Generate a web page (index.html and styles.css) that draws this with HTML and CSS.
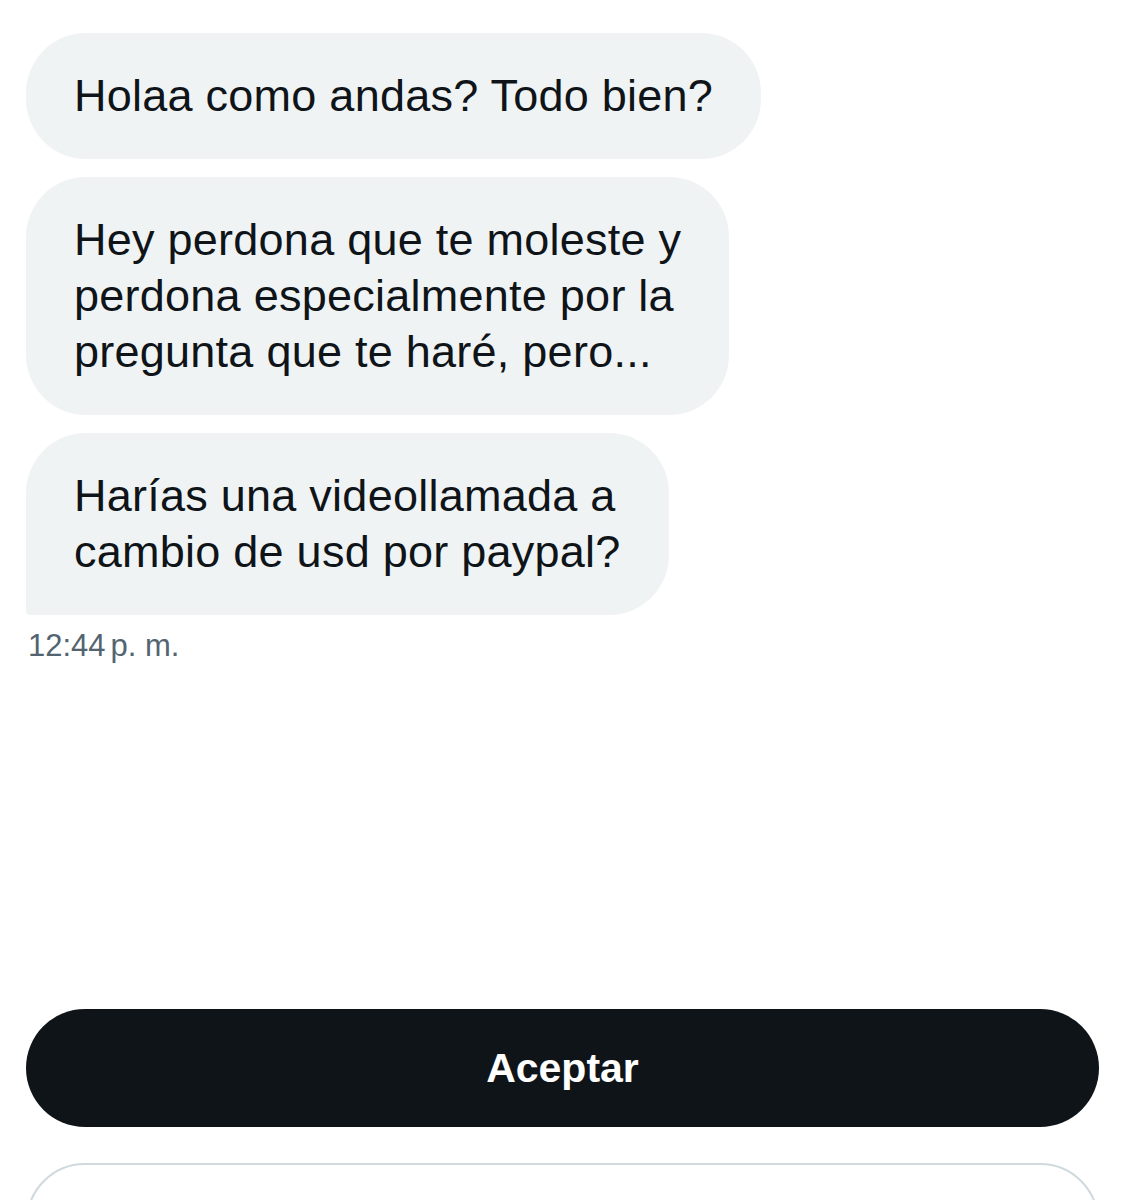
FILE: index.html
```html
<!DOCTYPE html>
<html lang="es">
<head>
<meta charset="utf-8">
<title>Mensajes</title>
<link rel="stylesheet" href="styles.css">
</head>
<body>
<main class="screen">
  <section class="thread">
    <div class="bubble">Holaa como andas? Todo bien?</div>
    <div class="bubble">Hey perdona que te moleste y<br>perdona especialmente por la<br>pregunta que te haré, pero...</div>
    <div class="bubble bubble-last">Harías una videollamada a<br>cambio de usd por paypal?</div>
    <div class="time">12:44<span class="ampm">p. m.</span></div>
  </section>
  <section class="actions">
    <button class="btn btn-primary">Aceptar</button>
    <button class="btn btn-secondary" aria-label="Eliminar"></button>
  </section>
</main>
</body>
</html>
```

FILE: styles.css
```css
html, body {
  margin: 0;
  padding: 0;
  background: #ffffff;
}
body {
  font-family: "Liberation Sans", Arial, sans-serif;
  color: #0f1419;
  overflow: hidden;
  height: 1200px;
}
.screen {
  padding: 33px 27px 0 26px;
}
.thread {
  display: flex;
  flex-direction: column;
  align-items: flex-start;
  gap: 18px;
}
.bubble {
  box-sizing: border-box;
  white-space: nowrap;
  background: #eff3f4;
  border-radius: 60px;
  padding: 35px 48px 35px 48px;
  font-size: 45px;
  letter-spacing: 0.25px;
  line-height: 56px;
  color: #0f1419;
}
.bubble-last {
  border-bottom-left-radius: 4px;
}
.time {
  margin-top: -5px;
  padding-left: 2px;
  font-size: 31px;
  line-height: 36px;
  color: #536471;
}
.ampm {
  margin-left: 5px;
}
.actions {
  margin-top: 345px;
  display: flex;
  flex-direction: column;
  gap: 36px;
}
.btn {
  box-sizing: border-box;
  width: 100%;
  height: 118px;
  border-radius: 59px;
  font-family: "Liberation Sans", Arial, sans-serif;
  font-weight: 700;
  font-size: 41px;
  cursor: pointer;
}
.btn-primary {
  background: #0f1419;
  color: #ffffff;
  border: none;
}
.btn-secondary {
  background: #ffffff;
  color: #0f1419;
  border: 2px solid #cfd9de;
}
```
